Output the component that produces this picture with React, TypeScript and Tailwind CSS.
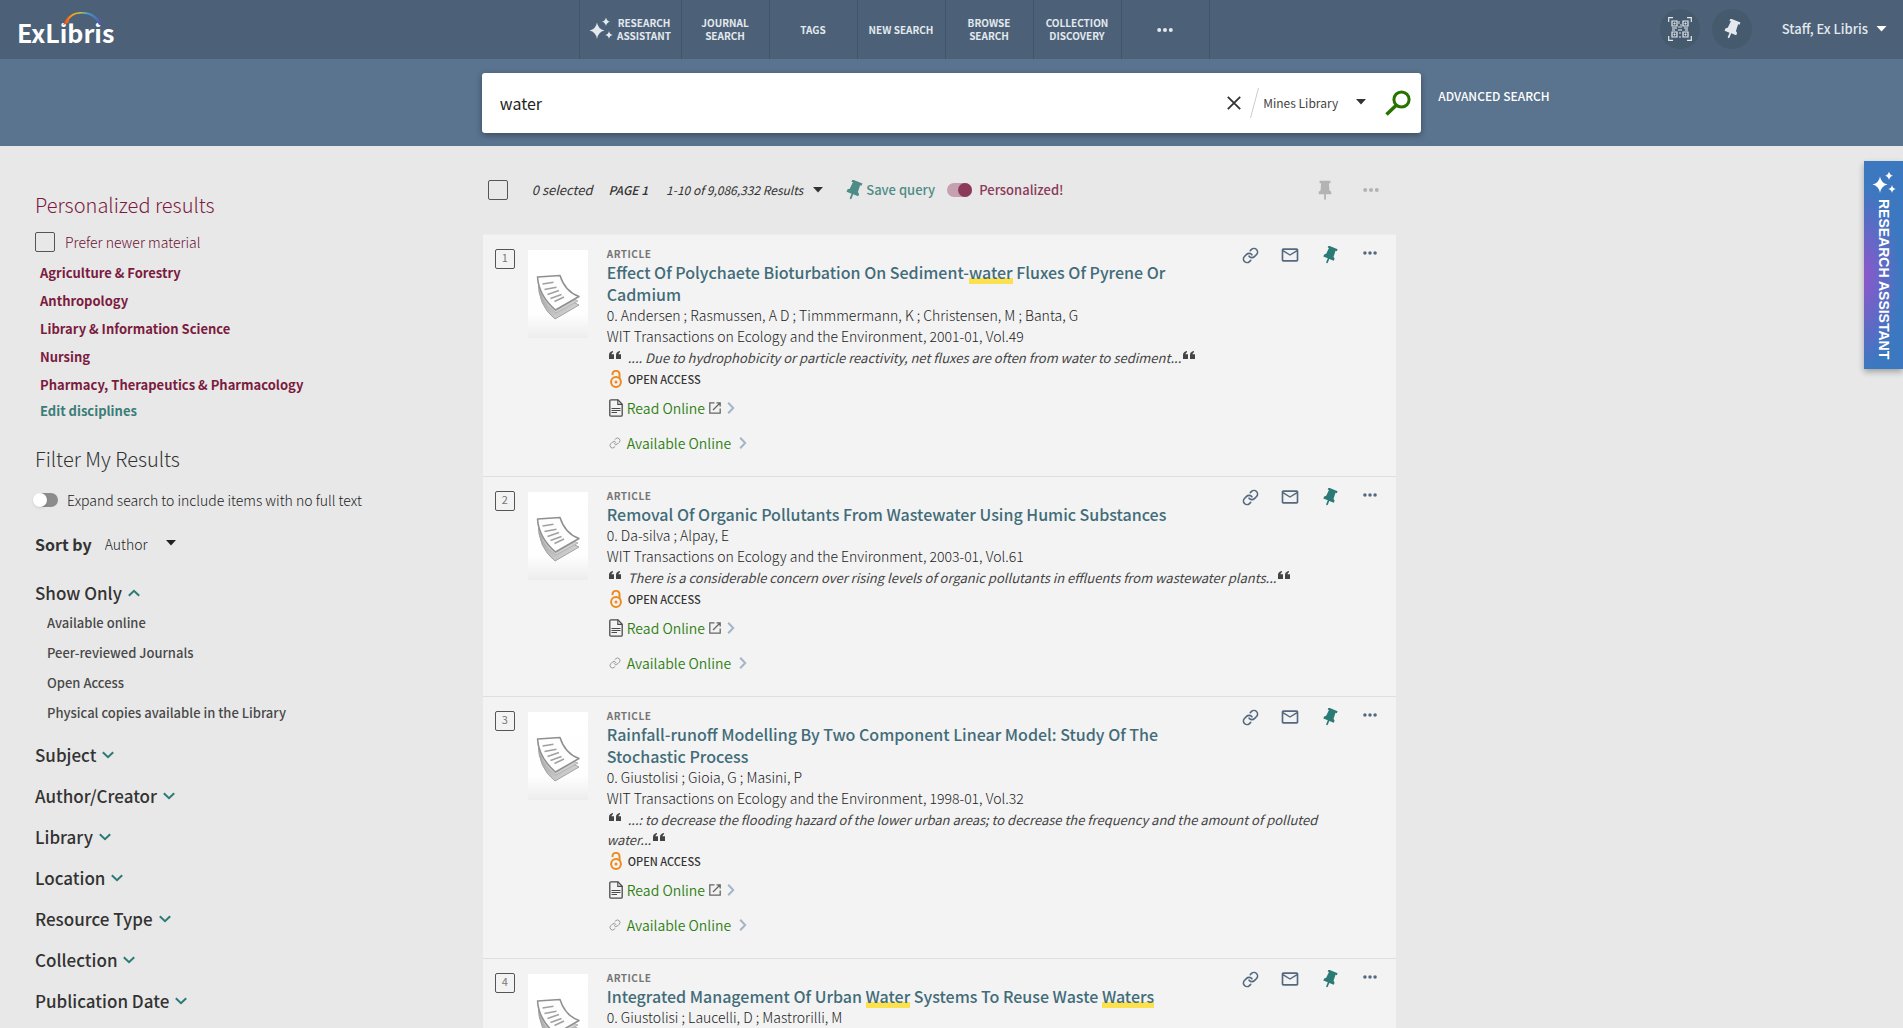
import type { ReactNode } from 'react';
import { Link as LinkIcon } from 'lucide-react';
import { MdMailOutline } from 'react-icons/md';

function Pin({ className = '', tilt = false }: { className?: string; tilt?: boolean }) {
  return (
    <svg viewBox="0 0 24 24" className={className} fill="currentColor" aria-hidden="true">
      <path
        transform={tilt ? 'rotate(22 12 12)' : undefined}
        d="M5.5 1h13v3h-1.8l.6 8.5 2.2 1.7v3h-6.4V23l-1.1 1-1.1-1v-5.8H4.5v-3l2.2-1.7.6-8.5H5.5z"
      />
    </svg>
  );
}

function Sparkles({ className = '' }: { className?: string }) {
  return (
    <svg viewBox="0 0 24 24" className={className} fill="currentColor" aria-hidden="true">
      <path d="M8 5.500Q9 12 15.500 13.500Q9 15 8 22Q7 15 .5 13.500Q7 12 8 5.500z" />
      <path d="M17 .5Q17.600 4 21 4.800Q17.600 5.600 17 9Q16.400 5.600 13 4.800Q16.400 4 17 .5z" />
      <path d="M20 14Q20.500 17.400 23.800 18Q20.500 18.600 20 22Q19.500 18.600 16.200 18Q19.500 17.400 20 14z" />
    </svg>
  );
}

function Caret({ className = '' }: { className?: string }) {
  return (
    <svg viewBox="0 0 10 6" className={className} fill="currentColor" aria-hidden="true">
      <path d="M0 0h10L5 5.500z" />
    </svg>
  );
}

function Dots({ className = '' }: { className?: string }) {
  return (
    <svg viewBox="0 0 16 4" className={className} fill="currentColor" aria-hidden="true">
      <circle cx="2.200" cy="2" r="2" />
      <circle cx="8" cy="2" r="2" />
      <circle cx="13.800" cy="2" r="2" />
    </svg>
  );
}

function Chevron({ className = '' }: { className?: string }) {
  return (
    <svg viewBox="0 0 12 8" className={className} fill="none" stroke="currentColor" strokeWidth="2" aria-hidden="true">
      <path d="M.8 1.200 6 6.200l5.200-5" />
    </svg>
  );
}

function Quote({ className = '' }: { className?: string }) {
  return (
    <svg viewBox="0 0 12 8" className={className} fill="currentColor" aria-hidden="true">
      <path d="M4 0v1.200C3.100 1.700 2.600 2.300 2.500 3.200H5V8H0V4C0 2 1.200.4 4 0zM11 0v1.200c-.9.5-1.400 1.100-1.500 2H12V8H7V4c0-2 1.200-3.600 4-4z" />
    </svg>
  );
}

function OpenLock() {
  return (
    <svg viewBox="0 0 12 18" className="h-[18px] w-3" fill="none" stroke="#ee8a1d" strokeWidth="2" aria-hidden="true">
      <circle cx="6" cy="12" r="4.900" />
      <circle cx="6" cy="12" r="1.500" fill="#ee8a1d" stroke="none" />
      <path d="M2.500 5V4.300a3.500 3.500 0 0 1 7 0V9" />
    </svg>
  );
}

function FileIcon() {
  return (
    <svg viewBox="0 0 14 18" className="h-[18px] w-3.5" fill="none" stroke="#4a4a4a" strokeWidth="1.300" aria-hidden="true">
      <path d="M2 .8h7l4.200 4.400V16q0 1.200-1.200 1.200H2Q.8 17.200.8 16V2Q.8.8 2 .8z" />
      <path d="M8.800.8v4.600h4.400M2.500 9.500h9M2.500 11.500h9M2.500 13.500h5.500" strokeWidth="1.100" />
    </svg>
  );
}

function External() {
  return (
    <svg viewBox="0 0 12 12" className="size-3" fill="none" stroke="#666" strokeWidth="1.300" aria-hidden="true">
      <path d="M5.500.8H.8v10.400h10.400V6.500M7.500.8h3.700v3.700M11 1 4 8" />
    </svg>
  );
}

function ScanCode() {
  return (
    <svg viewBox="0 0 24 24" className="size-6" fill="none" stroke="currentColor" aria-hidden="true">
      <path d="M.7 5V.7H5M19 .7h4.300V5M23.300 19v4.300H19M5 23.300H.7V19" strokeWidth="1.200" />
      <path d="M4 4h5v5H4zM15 4h5v5h-5zM4 15h5v5H4zM15 15h5v5h-5z" strokeWidth="1.200" />
      <path d="M6 6h1v1H6zM17 6h1v1h-1zM6 17h1v1H6zM17 17h1v1h-1z" strokeWidth="1" />
      <path d="M4 11h5M11 4v3M13 7v4M10 13h4M16 11h4M4 13h3M12 15v2M11 20h2M17 13h3M11 9v2" strokeWidth="1.300" opacity=".7" />
    </svg>
  );
}

function Papers() {
  return (
    <svg viewBox="0 0 60 88" className="h-[88px] w-[60px] shrink-0" role="img" aria-label="Article">
      <defs>
        <linearGradient id="sheet" x1="0" y1="0" x2="0" y2="1">
          <stop offset="0" stopColor="#fff" />
          <stop offset=".72" stopColor="#fefefe" />
          <stop offset="1" stopColor="#ededed" />
        </linearGradient>
        <linearGradient id="fold" x1="0" y1="0" x2="1" y2="1">
          <stop offset="0" stopColor="#9a9a9a" />
          <stop offset="1" stopColor="#dcdcdc" />
        </linearGradient>
      </defs>
      <rect width="60" height="88" fill="url(#sheet)" />
      <path d="M10 30q0 26 17 39l24-14-8-4z" fill="url(#fold)" stroke="#a3a3a3" strokeLinejoin="round" />
      <path d="M10 28q1 24 18 35l22-12-10-4z" fill="#cfcfcf" stroke="#b5b5b5" strokeLinejoin="round" />
      <path d="M9.500 27 32 25.500q5 16 19 21L27.500 60Q11 46 9.500 27z" fill="#fdfdfd" stroke="#8f8f8f" strokeWidth="1.500" strokeLinejoin="round" />
      <path d="m14.500 34 11-1.700M16.500 39.500l12-2.200M19.500 44.500l11.500-4M22.500 48.500l11-4M26.500 51.500l9.500-4.500" stroke="#a0a0a0" strokeWidth="1.500" />
    </svg>
  );
}

function Mark({ children }: { children: ReactNode }) {
  return <mark className="bg-transparent text-inherit shadow-[inset_0_-6px_0_#fbe14f]">{children}</mark>;
}

type Result = { title: ReactNode; authors: string; source: string; snippet: string };

const results: Result[] = [
  {
    title: (
      <>
        Effect Of Polychaete Bioturbation On Sediment-<Mark>water</Mark> Fluxes Of Pyrene Or Cadmium
      </>
    ),
    authors: '0. Andersen ; Rasmussen, A D ; Timmmermann, K ; Christensen, M ; Banta, G',
    source: 'WIT Transactions on Ecology and the Environment, 2001-01, Vol.49',
    snippet: '.... Due to hydrophobicity or particle reactivity, net fluxes are often from water to sediment...',
  },
  {
    title: 'Removal Of Organic Pollutants From Wastewater Using Humic Substances',
    authors: '0. Da-silva ; Alpay, E',
    source: 'WIT Transactions on Ecology and the Environment, 2003-01, Vol.61',
    snippet: 'There is a considerable concern over rising levels of organic pollutants in effluents from wastewater plants...',
  },
  {
    title: 'Rainfall-runoff Modelling By Two Component Linear Model: Study Of The Stochastic Process',
    authors: '0. Giustolisi ; Gioia, G ; Masini, P',
    source: 'WIT Transactions on Ecology and the Environment, 1998-01, Vol.32',
    snippet:
      '...: to decrease the flooding hazard of the lower urban areas; to decrease the frequency and the amount of polluted water...',
  },
  {
    title: (
      <>
        Integrated Management Of Urban <Mark>Water</Mark> Systems To Reuse Waste <Mark>Waters</Mark>
      </>
    ),
    authors: '0. Giustolisi ; Laucelli, D ; Mastrorilli, M',
    source: 'WIT Transactions on Ecology and the Environment, 2005-01, Vol.80',
    snippet: 'The integrated management of urban water systems to reuse waste waters...',
  },
];

function ResultItem({ item, index }: { item: Result; index: number }) {
  return (
    <li className="flex border-b border-[#dedede] bg-[#f3f3f3] pb-4 pl-3 pr-1.5">
      <label className="relative mt-3.5 block size-5 shrink-0 cursor-pointer">
        <input type="checkbox" className="absolute inset-0 size-5 appearance-none rounded-xs border border-[#555]" />
        <span className="relative block text-center text-[11px] leading-4 text-[#777]">{index}</span>
      </label>
      <div className="ml-[13px] mt-[15px]">
        <Papers />
      </div>
      <div className="ml-[19px] min-w-0 flex-1 text-[#222]">
        <div className="flex items-start justify-between">
          <div className="min-w-0 max-w-[590px] pt-3">
            <p className="text-[10px] font-bold leading-[14px] tracking-wider text-[#757575]">ARTICLE</p>
            <h3 className="text-base font-medium leading-[22px] text-[#426c79]">
              <a href="#">{item.title}</a>
            </h3>
          </div>
          <div className="flex pt-1 text-[#54697f]">
            <button aria-label="Copy permalink" className="grid h-8 w-10 place-items-center">
              <LinkIcon className="size-[17px]" strokeWidth={2.3} />
            </button>
            <button aria-label="Email" className="grid h-8 w-10 place-items-center">
              <MdMailOutline className="size-5" />
            </button>
            <button aria-label="Pin this item" className="grid h-8 w-10 place-items-center text-[#2b7a75]">
              <Pin tilt className="size-[18px]" />
            </button>
            <button aria-label="More actions" className="grid h-7 w-10 place-items-center">
              <Dots className="h-1 w-3.5" />
            </button>
          </div>
        </div>
        <p className="text-sm font-light leading-[21px]">{item.authors}</p>
        <p className="text-sm font-light leading-[21px]">{item.source}</p>
        <p className="mt-px pr-12 text-[13px] italic leading-5 text-[#444]">
          <Quote className="ml-0.5 mr-[7px] inline-block h-2 w-3 align-[4px]" />
          {item.snippet}
          <Quote className="ml-0.5 inline-block h-2 w-3 align-[4px]" />
        </p>
        <p className="flex h-[22px] items-center gap-1.5 pl-[3px] text-[11px] font-medium text-[#333]">
          <OpenLock /> OPEN ACCESS
        </p>
        <div className="flex h-9 items-center gap-1 pl-[2px]">
          <FileIcon />
          <a href="#" className="flex items-center gap-1 text-sm font-[350] text-[#2f8012]">
            Read Online <External />
          </a>
          <Chevron className="h-2 w-3 -rotate-90 text-[#a5b5c8]" />
        </div>
        <div className="flex h-[34px] items-center pl-[2px]">
          <LinkIcon className="size-3 text-[#999]" />
          <a href="#" className="ml-1.5 text-sm font-[350] text-[#2f8012]">
            Available Online
          </a>
          <Chevron className="ml-1.5 h-2 w-3 -rotate-90 text-[#a5b5c8]" />
        </div>
      </div>
    </li>
  );
}

const navItems = ['JOURNAL SEARCH', 'TAGS', 'NEW SEARCH', 'BROWSE SEARCH', 'COLLECTION DISCOVERY'];
const disciplines = [
  'Agriculture & Forestry',
  'Anthropology',
  'Library & Information Science',
  'Nursing',
  'Pharmacy, Therapeutics & Pharmacology',
];
const showOnly = ['Available online', 'Peer-reviewed Journals', 'Open Access', 'Physical copies available in the Library'];
const facets = ['Subject', 'Author/Creator', 'Library', 'Location', 'Resource Type', 'Collection', 'Publication Date'];

function Header() {
  return (
    <header className="flex h-[59px] bg-[#4c6177] text-[#e3e9ef]">
      <div className="w-[30.4%] pl-[17px] pt-2.5">
        <a href="#" aria-label="ExLibris" className="relative inline-block text-[25px] font-bold leading-[44px] text-white">
          ExLibris
          <svg viewBox="0 0 40 14" className="absolute left-[46px] top-0.5 h-3.5 w-10" aria-hidden="true">
            <defs>
              <linearGradient id="rainbow">
                <stop offset="0" stopColor="#e8401c" />
                <stop offset=".22" stopColor="#f39a1e" />
                <stop offset=".42" stopColor="#c9c83c" />
                <stop offset=".62" stopColor="#3fa3d8" />
                <stop offset="1" stopColor="#5746a0" />
              </linearGradient>
            </defs>
            <path d="M0 13Q5 0 19 0T40 13h-4Q31 1.500 19 1.500T5 11z" fill="url(#rainbow)" />
          </svg>
        </a>
      </div>
      <nav className="flex border-x border-[#40546a] text-[10px] font-bold leading-[13px]">
        <a href="#" className="flex w-[101px] items-center justify-center gap-1 pb-px text-center">
          <Sparkles className="size-6 shrink-0" />
          <span>
            RESEARCH
            <br />
            ASSISTANT
          </span>
        </a>
        {navItems.map((n) => (
          <a key={n} href="#" className="flex w-[88px] items-center justify-center border-l border-[#40546a] px-1 pb-px text-center">
            {n}
          </a>
        ))}
        <button aria-label="More" className="grid w-[88px] place-items-center border-l border-[#40546a]">
          <Dots className="h-1 w-4" />
        </button>
      </nav>
      <div className="flex flex-1 items-center justify-end pb-px pr-4">
        <button aria-label="Scan code" className="grid size-10 place-items-center rounded-full bg-[#465a6d]">
          <ScanCode />
        </button>
        <button aria-label="My favorites" className="ml-3 grid size-10 place-items-center rounded-full bg-[#465a6d]">
          <Pin tilt className="size-5" />
        </button>
        <button className="ml-[30px] flex items-center gap-2 text-[13px] font-medium">
          Staff, Ex Libris <Caret className="h-1.5 w-[11px] text-white" />
        </button>
      </div>
    </header>
  );
}

function SearchBar() {
  return (
    <div className="flex h-[87px] bg-[#5a738e]">
      <div className="w-1/4" />
      <form className="mt-3.5 flex h-[60px] w-1/2 px-1.5">
        <div className="flex flex-1 items-center rounded-[3px] bg-white pl-[18px] pr-2.5 shadow-[0_2px_6px_rgba(0,0,0,0.35)]">
          <input
            type="text"
            aria-label="Search"
            defaultValue="water"
            className="min-w-0 flex-1 bg-transparent text-base text-[#222] outline-none"
          />
          <button type="button" aria-label="Clear" className="mr-1.5 grid size-5 place-items-center text-[#333]">
            <svg viewBox="0 0 14 14" className="size-3.5" fill="none" stroke="currentColor" strokeWidth="1.800">
              <path d="m.8.8 12.400 12.400M13.200.8.8 13.200" />
            </svg>
          </button>
          <svg viewBox="0 0 9 30" className="h-[30px] w-[9px]" stroke="#ccc" strokeWidth="1" aria-hidden="true">
            <path d="M8.500 0 .5 30" />
          </svg>
          <div className="relative ml-1 text-xs text-[#444]">
            <select aria-label="Search scope" className="w-[103px] appearance-none bg-transparent py-2">
              <option>Mines Library</option>
            </select>
            <Caret className="pointer-events-none absolute right-0 top-1/2 -mt-1 h-1.5 w-2.5 text-[#333]" />
          </div>
          <button type="button" aria-label="Submit search" className="ml-[19px] text-[#267300]">
            <svg viewBox="0 0 26 26" className="size-[26px]" fill="none" stroke="currentColor">
              <circle cx="16.500" cy="9.500" r="7.600" strokeWidth="3" />
              <path d="M11 15.500 1.500 24.500" strokeWidth="3.500" />
            </svg>
          </button>
        </div>
      </form>
      <a href="#" className="ml-[11px] mt-[27px] text-xs font-medium leading-5 text-white">
        ADVANCED SEARCH
      </a>
    </div>
  );
}

function Sidebar() {
  return (
    <aside className="w-1/4 pl-[35px] pt-[39px] text-[#333]">
      <h2 className="h-10 text-xl font-light leading-10 text-[#7b1b3f]">Personalized results</h2>
      <label className="flex h-[34px] items-center gap-[10px] text-sm font-light text-[#6b0f33]">
        <input type="checkbox" className="size-5 appearance-none rounded-xs border border-[#555]" />
        Prefer newer material
      </label>
      <ul className="pl-[5px] text-[13px] font-bold text-[#7b1b3f]">
        {disciplines.map((d) => (
          <li key={d} className="h-7 leading-7">
            {d}
          </li>
        ))}
        <li className="h-6 leading-6 text-[#3a7d78]">
          <button>Edit disciplines</button>
        </li>
      </ul>
      <h2 className="mt-4 h-10 text-xl font-light leading-10">Filter My Results</h2>
      <label className="flex h-[42px] items-center gap-[9px] text-sm font-light text-[#222]">
        <span className="relative -ml-0.5 h-3.5 w-[25px]">
          <input type="checkbox" role="switch" className="absolute inset-y-0 left-0.5 right-0 appearance-none rounded-full bg-[#8c8c8c]" />
          <span className="absolute left-0 top-0 size-3.5 rounded-full bg-white shadow-sm" />
        </span>
        Expand search to include items with no full text
      </label>
      <div className="flex h-[46px] items-center">
        <label htmlFor="sort" className="text-base font-bold">
          Sort by
        </label>
        <div className="relative ml-[13px] text-sm font-light text-[#222]">
          <select id="sort" className="w-[71px] appearance-none bg-transparent">
            <option>Author</option>
          </select>
          <Caret className="pointer-events-none absolute right-0 top-1/2 -mt-1 h-1.5 w-2.5" />
        </div>
      </div>
      <button className="mt-[11px] flex h-[30px] items-center gap-1.5 text-[17px] font-medium">
        Show Only <Chevron className="h-2 w-3 rotate-180 text-[#2b7a75]" />
      </button>
      <ul className="pl-3 text-[13px] font-medium text-[#484848]">
        {showOnly.map((s) => (
          <li key={s} className="h-[30px] leading-[30px]">
            {s}
          </li>
        ))}
      </ul>
      <div className="mt-1.5">
        {facets.map((f) => (
          <button key={f} className="flex h-[41px] items-center gap-1.5 text-[17px] font-medium">
            {f} <Chevron className="h-2 w-3 text-[#2b7a75]" />
          </button>
        ))}
      </div>
    </aside>
  );
}

function Toolbar() {
  return (
    <div className="flex h-[88px] items-center text-[#333]">
      <input type="checkbox" aria-label="Select all" className="ml-[5px] size-5 appearance-none rounded-xs border border-[#555]" />
      <span className="ml-6 text-[13px] italic">0 selected</span>
      <span className="ml-4 text-xs font-medium italic">PAGE 1</span>
      <button className="ml-[18px] flex items-center gap-2.5 text-xs italic">
        1-10 of 9,086,332 Results <Caret className="h-1.5 w-2.5" />
      </button>
      <button className="ml-[21px] flex items-center gap-0.5 text-[13px] font-medium text-[#4d8c87]">
        <Pin tilt className="size-5" /> Save query
      </button>
      <label className="ml-3 flex items-center gap-[7px] text-[13px] font-medium text-[#8b3a5a]">
        <span className="relative h-3.5 w-[25px]">
          <input type="checkbox" role="switch" defaultChecked className="absolute inset-y-0 left-0 right-0 appearance-none rounded-full bg-[#c5a0b0]" />
          <span className="absolute right-0 top-0 size-3.5 rounded-full bg-[#8b3a5a]" />
        </span>
        Personalized!
      </label>
      <div className="ml-auto mr-0.5 flex text-[#b3b3b3]">
        <button aria-label="Pin selected" className="grid h-8 w-[46px] place-items-center">
          <Pin className="size-5" />
        </button>
        <button aria-label="More options" className="grid h-8 w-[46px] place-items-center">
          <Dots className="h-1 w-4" />
        </button>
      </div>
    </div>
  );
}

export default function App() {
  return (
    <div className="relative h-screen overflow-hidden bg-[#e8e8e8] font-['Noto_Sans_CJK_SC',sans-serif]">
      <Header />
      <SearchBar />
      <div className="flex">
        <Sidebar />
        <main className="w-1/2 pl-[7px] pr-[31px]">
          <Toolbar />
          <ol className="border-t border-[#ededed]">
            {results.map((r, i) => (
              <ResultItem key={i} item={r} index={i + 1} />
            ))}
          </ol>
        </main>
      </div>
      <button className="absolute right-0 top-[161px] flex h-[208px] w-[39px] flex-col items-center bg-[radial-gradient(ellipse_36px_90px_at_0%_56%,#8d57cc,#3c78c0)] pt-2.5 text-white shadow-[0_3px_6px_rgba(0,0,0,0.3)]">
        <Sparkles className="size-6" />
        <span className="mt-1 whitespace-nowrap font-['Liberation_Sans'] text-sm font-bold leading-4 [writing-mode:vertical-rl]">RESEARCH ASSISTANT</span>
      </button>
    </div>
  );
}
